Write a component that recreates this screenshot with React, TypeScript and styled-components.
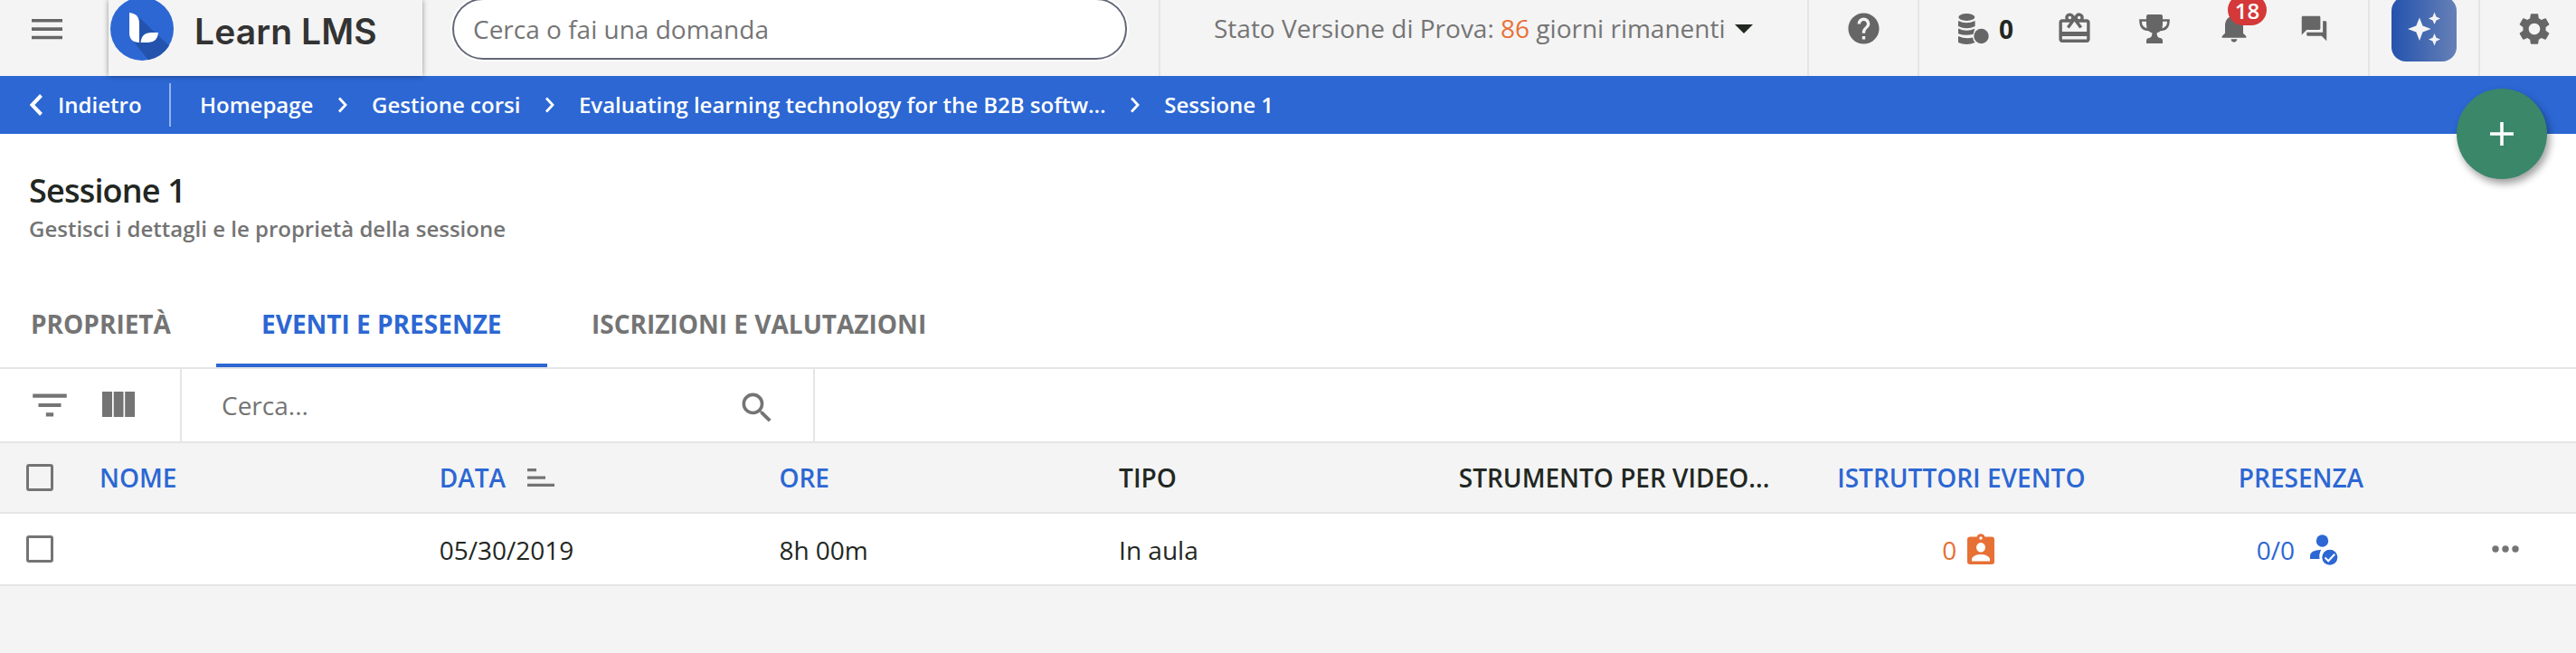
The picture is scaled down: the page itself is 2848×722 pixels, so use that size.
import React from "react";
import styled, { createGlobalStyle } from "styled-components";
import {
  MdHelp,
  MdRedeem,
  MdNotifications,
  MdForum,
  MdSettings,
  MdFilterList,
  MdSearch,
} from "react-icons/md";

const blue = "#2c67d3";
const ink = "#222722";
const grey = "#747474";
const iconGrey = "#666666";
const line = "#e5e5e5";
const pale = "#f4f4f4";

const GlobalStyle = createGlobalStyle`
  * { box-sizing: border-box; }
  body { margin: 0; background: ${pale}; font-family: "Open Sans", "Noto Sans", sans-serif; font-size: 28px; color: ${ink}; }
  svg { display: block; flex: none; }
`;

const Page = styled.div`
  height: 722px;
  overflow: hidden;
  background: ${pale};
`;

const Header = styled.header`
  display: flex;
  height: 84px;
  background: ${pale};
`;

const MenuButton = styled.div`
  width: 120px;
  padding: 21px 0 0 35px;
`;

const Brand = styled.div`
  position: relative;
  z-index: 1;
  display: flex;
  width: 347px;
  height: 84px;
  margin-right: 33px;
  background: ${pale};
  box-shadow: 0 0 6px rgba(0, 0, 0, 0.4);
`;

const BrandMark = styled.svg`
  margin: -3px 0 0 2px;
`;

const BrandName = styled.span`
  margin: 11px 0 0 23px;
  font-family: Inter, sans-serif;
  font-size: 39px;
  line-height: 47px;
  font-weight: 600;
  letter-spacing: 0.1px;
  white-space: nowrap;
  color: #333;
`;

const SearchPill = styled.div`
  width: 746px;
  height: 68px;
  margin: -2px 35px 0 0;
  padding: 0 21px;
  border: 2px solid #636878;
  border-radius: 34px;
  background: #fff;
  box-shadow: 0 0 0 2px #fff;
  line-height: 64px;
  color: #757575;
`;

const HeaderCell = styled.div<{ $w: number; $pad: number }>`
  display: flex;
  width: ${(p) => p.$w}px;
  padding-left: ${(p) => p.$pad}px;
  border-left: 2px solid ${line};
  color: ${iconGrey};
`;

const Trial = styled.span`
  margin-top: 12px;
  line-height: 38px;
  white-space: nowrap;
  color: #757575;
  b {
    font-weight: 400;
    color: #e87038;
  }
`;

const Caret = styled.span`
  width: 0;
  height: 0;
  margin: 27px 0 0 10px;
  border: 10.5px solid transparent;
  border-top-color: ${ink};
  border-bottom: 0;
`;

const IconSlot = styled.div<{ $top: number; $gap?: number }>`
  position: relative;
  height: max-content;
  margin: ${(p) => p.$top}px 0 0 ${(p) => p.$gap ?? 0}px;
`;

const Points = styled.span`
  width: 18px;
  margin: 13px 0 0 11px;
  font-weight: 700;
  line-height: 38px;
  color: ${ink};
`;

const Badge = styled.span`
  position: absolute;
  left: 13px;
  top: -16px;
  width: 43px;
  height: 34px;
  border-radius: 17px;
  background: #d43838;
  color: #fff;
  font-size: 24px;
  font-weight: 600;
  line-height: 35px;
  text-align: center;
`;

const AiButton = styled.div`
  display: flex;
  width: 72px;
  height: 72px;
  margin-top: -4px;
  padding: 17px 0 0 17px;
  border-radius: 16px;
  background: linear-gradient(90deg, #2453ae, #6680b6);
`;

const Crumbs = styled.nav`
  position: relative;
  display: flex;
  align-items: center;
  height: 64px;
  padding: 0 0 2px 32px;
  background: ${blue};
  color: #fff;
  font-size: 24px;
  font-weight: 600;
  white-space: nowrap;
`;

const Back = styled.div`
  display: flex;
  align-items: center;
  gap: 16px;
  width: 157px;
  height: 48px;
  margin: 2px 32px 0 0;
  padding-bottom: 2px;
  border-right: 2px solid rgba(255, 255, 255, 0.5);
`;

const BackArrow = styled.svg`
  margin-top: 2px;
`;

const CrumbArrow = styled.svg`
  margin: 2px 26.3px 0;
`;

const AddButton = styled.div`
  position: absolute;
  right: 32px;
  top: 14px;
  z-index: 2;
  display: grid;
  place-items: center;
  width: 100px;
  height: 100px;
  border-radius: 50%;
  background: #3b8769;
  box-shadow: 3px 5px 8px rgba(0, 0, 0, 0.38);
`;

const TitleBlock = styled.div`
  height: 168px;
  padding: 38px 0 0 32px;
  background: #fff;
`;

const Title = styled.h1`
  margin: 0;
  font-size: 36px;
  line-height: 50px;
  font-weight: 600;
  letter-spacing: -0.8px;
`;

const Subtitle = styled.p`
  margin: 0;
  font-size: 24px;
  line-height: 34px;
  font-weight: 600;
  color: ${grey};
`;

const Tabs = styled.div`
  display: flex;
  height: 92px;
  border-bottom: 2px solid ${line};
  background: #fff;
`;

const Tab = styled.div<{ $w: number; $pad: number; $active?: boolean }>`
  width: ${(p) => p.$w}px;
  padding: 23px 0 0 ${(p) => p.$pad}px;
  border-bottom: 4px solid ${(p) => (p.$active ? blue : "transparent")};
  color: ${(p) => (p.$active ? blue : grey)};
  font-weight: 700;
  line-height: 38px;
  white-space: nowrap;
`;

const Toolbar = styled.div`
  display: flex;
  height: 82px;
  border-bottom: 2px solid ${line};
  background: #fff;
  color: ${grey};
`;

const Tools = styled.div`
  display: flex;
  width: 201px;
  border-right: 2px solid ${line};
`;

const TableSearch = styled.div`
  display: flex;
  justify-content: space-between;
  width: 700px;
  padding: 0 40px 0 44px;
  border-right: 2px solid ${line};
  line-height: 80px;
`;

const Row = styled.div<{ $head?: boolean }>`
  display: grid;
  grid-template-columns: 102px repeat(7, 375.7px) 1fr;
  align-items: center;
  height: ${(p) => (p.$head ? 78 : 80)}px;
  border-bottom: 2px solid ${line};
  background: ${(p) => (p.$head ? pale : "#fff")};
  font-weight: ${(p) => (p.$head ? 600 : 400)};
`;

const Cell = styled.div<{ $color?: string; $center?: boolean; $body?: boolean }>`
  display: flex;
  align-items: center;
  justify-content: ${(p) => (p.$center ? "center" : "flex-start")};
  padding: ${(p) => (p.$body ? 2 : 0)}px 8px 0;
  line-height: 38px;
  white-space: nowrap;
  color: ${(p) => p.$color ?? ink};
`;

const Instructors = styled.span`
  display: flex;
  align-items: center;
  gap: 12px;
  margin-left: 16px;
`;

const Attendance = styled.span`
  display: flex;
  align-items: center;
  gap: 17px;
  margin-right: 8px;
`;

const Checkbox = styled.div`
  width: 30px;
  height: 30px;
  margin-left: 29px;
  border: 3.5px solid ${grey};
  border-radius: 3px;
`;

const SortIcon = styled.svg`
  margin-left: 24px;
`;

const InstructorIcon = styled.svg`
  margin-top: -3px;
`;

const More = styled.svg`
  margin-left: 23px;
`;

const Arrow = () => (
  <CrumbArrow width="12" height="18" viewBox="0 0 12 18" fill="none" stroke="#fff" strokeWidth="2.8">
    <path d="M2 1.5 9 9 2 16.5" />
  </CrumbArrow>
);

export default function App() {
  return (
    <Page>
      <GlobalStyle />
      <Header>
        <MenuButton>
          <svg width="34" height="23" viewBox="0 0 34 23" fill={iconGrey}>
            <path d="M0 0h34v3.6H0zM0 9.3h34v3.6H0zM0 18.7h34v3.6H0z" />
          </svg>
        </MenuButton>
        <Brand>
          <BrandMark width="70" height="70" viewBox="0 0 70 70">
            <circle cx="35" cy="35" r="35" fill={blue} />
            <path d="M32 22.500 65 53.500A35 35 0 0 1 42 69.300L26 49.500z" fill="#2453ad" />
            <path d="M21 17q11 1 11 12v21q-11 0-11-11z" fill="#fff" />
            <path d="M33.500 50q1-11 12-11h7.500q-1 11-11 11z" fill="#fff" />
          </BrandMark>
          <BrandName>Learn LMS</BrandName>
        </Brand>
        <SearchPill>Cerca o fai una domanda</SearchPill>
        <HeaderCell $w={717} $pad={59}>
          <Trial>
            Stato Versione di Prova: <b>86</b> giorni rimanenti
          </Trial>
          <Caret />
        </HeaderCell>
        <HeaderCell $w={122} $pad={40}>
          <IconSlot $top={11}>
            <MdHelp size={41} />
          </IconSlot>
        </HeaderCell>
        <HeaderCell $w={498} $pad={43}>
          <IconSlot $top={15}>
            <svg width="34" height="34" viewBox="0 0 34 34" fill="currentColor">
              <ellipse cx="9.3" cy="4" rx="9" ry="3.9" />
              <path d="M0 8q9.3 4.600 18.600 0v6q-9.300 4.500-18.600 0zM0 16.500q9.300 4.500 18.300 0.200l-1.800 6q-8 2.500-16.500-.5zM0 25q8 3.500 16 1.600.400 3.400 2.600 5.400-9.300 4-18.600 0z" />
              <circle cx="25.500" cy="25" r="8.200" />
            </svg>
          </IconSlot>
          <Points>0</Points>
          <IconSlot $top={11} $gap={45}>
            <MdRedeem size={41} />
          </IconSlot>
          <IconSlot $top={16} $gap={51}>
            <svg width="34" height="32" viewBox="0 0 34 32">
              <path d="M9 6.500H1.500Q1.500 17 11 17M25 6.500h7.500Q32.500 17 23 17" fill="none" stroke="currentColor" strokeWidth="2.600" />
              <path d="M8 2q0-2 2-2h14q2 0 2 2v9q0 8-6.500 9.500.3 5 3.500 5.500 3 .3 3 3v3H8v-3q0-2.700 3-3 3.200-.5 3.500-5.500Q8 19 8 11z" fill="currentColor" />
            </svg>
          </IconSlot>
          <IconSlot $top={10} $gap={51}>
            <MdNotifications size={40} />
            <Badge>18</Badge>
          </IconSlot>
          <IconSlot $top={15} $gap={52}>
            <MdForum size={33} />
          </IconSlot>
        </HeaderCell>
        <HeaderCell $w={122} $pad={24}>
          <AiButton>
            <svg width="38" height="38" viewBox="0 0 38 38" fill="#f4f4f4">
              <path d="M14 6.500 17.500 15.500 26.700 19 17.500 22.500 14 32 10.300 22.500 1 19 10.300 15.500zM30.500.500 32.500 5.500 37 7.500 32.500 9.500 30.500 14 28.500 9.500 24 7.500 28.500 5.500zM30.500 24 32.500 28.800 37 30.600 32.500 32.500 30.500 37.500 28.500 32.500 24 30.600 28.500 28.800z" />
            </svg>
          </AiButton>
        </HeaderCell>
        <HeaderCell $w={108} $pad={39}>
          <IconSlot $top={11}>
            <MdSettings size={42} />
          </IconSlot>
        </HeaderCell>
      </Header>
      <Crumbs>
        <Back>
          <BackArrow width="16" height="24" viewBox="0 0 16 24" fill="none" stroke="#fff" strokeWidth="4">
            <path d="M13.500 1.500 3.500 12l10 10.500" />
          </BackArrow>
          Indietro
        </Back>
        Homepage
        <Arrow />
        Gestione corsi
        <Arrow />
        Evaluating learning technology for the B2B softw...
        <Arrow />
        Sessione 1
        <AddButton>
          <svg width="26" height="26" viewBox="0 0 26 26" fill="#fff">
            <path d="M11.200 0h3.600v11.200H26v3.600H14.800V26h-3.600V14.800H0v-3.600h11.200z" />
          </svg>
        </AddButton>
      </Crumbs>
      <TitleBlock>
        <Title>Sessione 1</Title>
        <Subtitle>Gestisci i dettagli e le proprietà della sessione</Subtitle>
      </TitleBlock>
      <Tabs>
        <Tab $w={239} $pad={34}>PROPRIETÀ</Tab>
        <Tab $w={366} $pad={50} $active>EVENTI E PRESENZE</Tab>
        <Tab $w={460} $pad={49}>ISCRIZIONI E VALUTAZIONI</Tab>
      </Tabs>
      <Toolbar>
        <Tools>
          <IconSlot $top={15} $gap={30}>
            <MdFilterList size={50} />
          </IconSlot>
          <IconSlot $top={25} $gap={33}>
            <svg width="36" height="28" viewBox="0 0 36 28" fill="currentColor">
              <path d="M0 0h11v28H0zM12.700 0h10.800v28H12.700zM25.200 0H36v28H25.200z" />
            </svg>
          </IconSlot>
        </Tools>
        <TableSearch>
          Cerca...
          <IconSlot $top={21}>
            <MdSearch size={44} />
          </IconSlot>
        </TableSearch>
      </Toolbar>
      <Row $head>
        <Checkbox />
        <Cell $color={blue}>NOME</Cell>
        <Cell $color={blue}>
          DATA
          <SortIcon width="30" height="20" viewBox="0 0 30 20" fill={grey}>
            <path d="M0 0h10v3.300H0zM0 8.400h20v3.300H0zM0 16.700h30V20H0z" />
          </SortIcon>
        </Cell>
        <Cell $color={blue}>ORE</Cell>
        <Cell>TIPO</Cell>
        <Cell>STRUMENTO PER VIDEO...</Cell>
        <Cell $color={blue} $center>ISTRUTTORI EVENTO</Cell>
        <Cell $color={blue} $center>PRESENZA</Cell>
      </Row>
      <Row>
        <Checkbox />
        <Cell $body />
        <Cell $body>05/30/2019</Cell>
        <Cell $body>8h 00m</Cell>
        <Cell $body>In aula</Cell>
        <Cell $body />
        <Cell $color="#e77035" $center $body>
          <Instructors>
            0
            <InstructorIcon width="30" height="34" viewBox="0 0 30 34" fill="currentColor">
              <path
                fillRule="evenodd"
                d="M3 3.500h7.500a4.700 4.700 0 0 1 9 0H27Q30 3.500 30 6.500v24.500q0 3-3 3H3Q0 34 0 31V6.500q0-3 3-3zM15 3.300a1.700 1.700 0 1 0 0 3.400 1.700 1.700 0 0 0 0-3.400zM15 10a5 5.200 0 1 0 0 10.400 5 5.200 0 0 0 0-10.400zM5 30.500h20v-2c0-3.700-5.500-5.600-10-5.600s-10 1.900-10 5.600z"
              />
            </InstructorIcon>
          </Instructors>
        </Cell>
        <Cell $color={blue} $center $body>
          <Attendance>
            0/0
            <svg width="31" height="34" viewBox="0 0 31 34">
              <circle cx="13.500" cy="7" r="6.700" fill="currentColor" />
              <path d="M0 27v-3.200q0-6.500 12.300-7Q9.500 22 10.500 27z" fill="currentColor" />
              <circle cx="21.800" cy="25.300" r="8.500" fill="currentColor" />
              <path d="m16.500 25.500 3.700 3.700 7-7.500" fill="none" stroke="#fff" strokeWidth="2" />
            </svg>
          </Attendance>
        </Cell>
        <More width="30" height="8" viewBox="0 0 30 8" fill={grey}>
          <circle cx="4" cy="4" r="3.700" />
          <circle cx="15" cy="4" r="3.700" />
          <circle cx="26" cy="4" r="3.700" />
        </More>
      </Row>
    </Page>
  );
}
